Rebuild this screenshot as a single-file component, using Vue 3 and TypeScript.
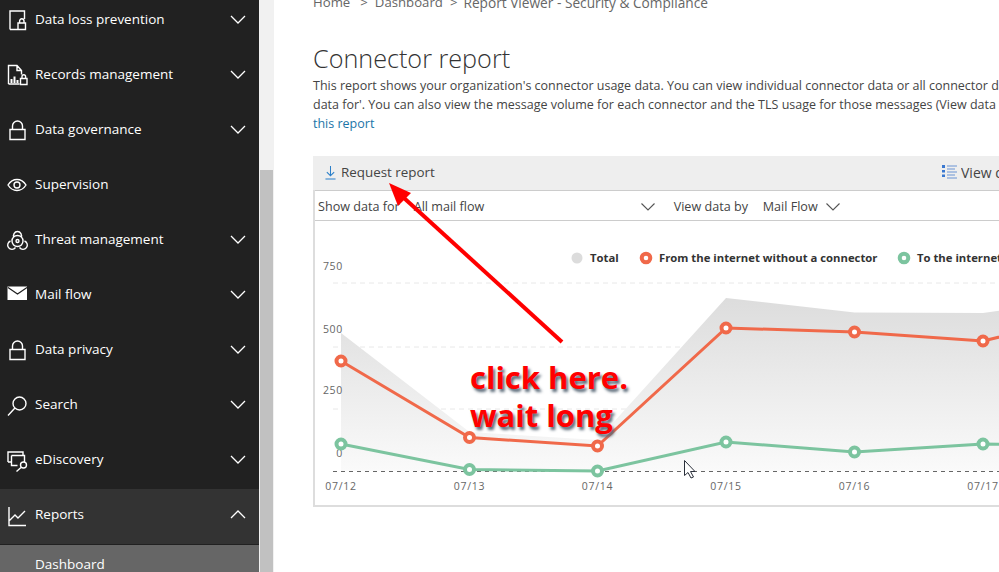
<script setup lang="ts">
const circle = (cx: number, cy: number, r: number): string =>
  `M${cx - r} ${cy}a${r} ${r} 0 1 0 ${2 * r} 0a${r} ${r} 0 1 0 ${-2 * r} 0z`

const lock = 'M3 10.5h15v10H3zM5.5 10.5V7a5 5 0 0 1 10 0v3.5'
const icons: Record<string, { d: string; f?: string }> = {
  dlp: { d: 'M3 20.5V2h14.5v8M3 20.5h7.500M11 14h7.500v6.500H11zM12.600 14v-2a2.200 2.200 0 0 1 4.400 0v2' },
  records: {
    d: 'M1.500 20V1.500h8.500l4.500 5v4M10 1.500v5h4.500M1.500 20h11M13.500 14.500h6.500v6h-6.500zM15 14.500v-2a1.800 1.800 0 0 1 3.600 0v2',
    f: 'M3.500 15h2v4h-2zM6.500 12.500h2v6.500h-2zM9.500 16h2v3h-2z'
  },
  lock: { d: lock },
  eye: { d: 'M1 11c2.500-4 5.500-5.500 9-5.500s6.500 1.500 9 5.500c-2.500 4-5.500 5.500-9 5.500s-6.500-1.500-9-5.500z' + circle(10, 11, 3) },
  bio: { d: 'M7 8.500a4 4 0 1 1 7 0M8.500 18.500a4.300 4.300 0 1 1-5-6.500M12.500 18.500a4.300 4.300 0 1 0 5-6.500' + circle(10.500, 12, 5.500) + circle(10.500, 12, 1.500) },
  mail: {
    d: 'M1 3.500l9.500 6.500 9.500-6.500',
    f: 'M.5 2.500h19.500v13.500H.5z'
  },
  search: { d: circle(12.500, 9.500, 6.500) + 'M7.700 14.300L1 21.500' },
  discovery: { d: 'M1 13V3h15v3.500M1 13h3.500M4.500 6.500h13v6M4.500 6.500v10h6M14 18.500L9.500 22.500' + circle(16.500, 16, 3) },
  reports: { d: 'M2 3v18.500h17M2 17l6-6 3 3 7-7' }
}

const navItems = [
  { label: 'Data loss prevention', icon: 'dlp', chev: true },
  { label: 'Records management', icon: 'records', chev: true },
  { label: 'Data governance', icon: 'lock', chev: true },
  { label: 'Supervision', icon: 'eye', chev: false },
  { label: 'Threat management', icon: 'bio', chev: true },
  { label: 'Mail flow', icon: 'mail', chev: true },
  { label: 'Data privacy', icon: 'lock', chev: true },
  { label: 'Search', icon: 'search', chev: true },
  { label: 'eDiscovery', icon: 'discovery', chev: true }
]

const xs = [341, 469.5, 597.5, 726, 854.5, 983, 1112]
const orangeY = [361, 437.5, 446, 328, 332, 341, 310]
const greenY = [444, 469.5, 471, 442, 452, 444, 447]
const areaY = [333, 432, 440, 298, 312.5, 313, 295]
const line = (ys: number[]): string => ys.map((y, i) => `${xs[i]},${y}`).join(' ')
const areaPoints = `${line(areaY)} 1112,471 341,471`
const orange = line(orangeY)
const green = line(greenY)
const markers = xs.slice(0, 6).map((x, i) => ({ x, o: orangeY[i], g: greenY[i] }))
const dates = ['07/12', '07/13', '07/14', '07/15', '07/16', '07/17'].map((t, i) => ({ t, x: xs[i] }))
const axis = [
  { t: '750', y: 270 },
  { t: '500', y: 333 },
  { t: '250', y: 394 },
  { t: '0', y: 457 }
]
const grid = [283, 347, 409]
</script>

<template>
  <div class="page">
    <aside class="sidebar">
      <nav class="nav">
        <div v-for="item in navItems" :key="item.label" class="row">
          <svg class="icon" viewBox="0 0 20 20" aria-hidden="true">
            <path v-if="icons[item.icon].f" class="icon-fill" :d="icons[item.icon].f" />
            <path :class="item.icon === 'mail' ? 'icon-dark' : 'icon-line'" :d="icons[item.icon].d" />
          </svg>
          <span class="row-label">{{ item.label }}</span>
          <svg v-if="item.chev" class="chev" viewBox="0 0 16 9" aria-hidden="true"><path d="M1 1l7 7 7-7" /></svg>
        </div>
        <div class="row row-active">
          <svg class="icon" viewBox="0 0 20 20" aria-hidden="true"><path class="icon-line" :d="icons.reports.d" /></svg>
          <span class="row-label">Reports</span>
          <svg class="chev" viewBox="0 0 16 9" aria-hidden="true"><path d="M1 8l7-7 7 7" /></svg>
        </div>
        <div class="sub-row">Dashboard</div>
      </nav>
    </aside>
    <div class="scrolltrack"><div class="scrollthumb"></div></div>

    <main class="main">
      <div class="crumbs">
        <span>Home</span><span class="sep">&gt;</span><span>Dashboard</span><span class="sep sep-b">&gt;</span><span class="crumb-last">Report Viewer - Security &amp; Compliance</span>
      </div>
      <h1 class="title">Connector report</h1>
      <div class="desc">
        <div>This report shows your organization's connector usage data. You can view individual connector data or all connector data using 'Show</div>
        <div>data for'. You can also view the message volume for each connector and the TLS usage for those messages (View data by). Learn more about</div>
        <a class="link">this report</a>
      </div>

      <section class="panel">
        <div class="toolbar">
          <svg class="dl-icon" viewBox="0 0 12 16" aria-hidden="true"><path d="M6 1v10M2 7.500l4 4 4-4M.5 15h11" /></svg>
          <span class="req">Request report</span>
          <span class="spacer"></span>
          <svg class="list-icon" viewBox="0 0 15 15" aria-hidden="true">
            <path class="list-dots" d="M0 0h3v3H0zM0 5h3v2.500H0zM0 9.500h3V12H0z" />
            <path class="list-lines" d="M5 1h10M5 4h8M5 7h10M5 10h8M5 13h10" />
          </svg>
          <span class="view">View details table</span>
        </div>
        <div class="filters">
          <span>Show data for</span>
          <span class="all">All mail flow</span>
          <svg class="fchev fchev-a" viewBox="0 0 14 8" aria-hidden="true"><path d="M.5.500l6.500 6.500 6.500-6.500" /></svg>
          <span class="by">View data by</span>
          <span class="flow">Mail Flow</span>
          <svg class="fchev fchev-b" viewBox="0 0 14 8" aria-hidden="true"><path d="M.5.500l6.500 6.500 6.500-6.500" /></svg>
        </div>
        <svg class="chart" viewBox="315 221 698 284" aria-label="Connector usage chart">
          <defs>
            <linearGradient id="areaGrad" x1="0" y1="0" x2="0" y2="1">
              <stop offset="0" stop-color="#dcdcdc" />
              <stop offset="1" stop-color="#fafafa" />
            </linearGradient>
          </defs>
          <line v-for="y in grid" :key="y" class="grid" x1="333" x2="1013" :y1="y" :y2="y" />
          <polygon :points="areaPoints" fill="url(#areaGrad)" />
          <line class="base" x1="333" x2="1013" y1="471.500" y2="471.500" />
          <text v-for="a in axis" :key="a.t" class="tick" x="343" :y="a.y" text-anchor="end">{{ a.t }}</text>
          <text v-for="d in dates" :key="d.t" class="tick" :x="d.x" y="490" text-anchor="middle">{{ d.t }}</text>
          <polyline class="series s-orange" :points="orange" />
          <polyline class="series s-green" :points="green" />
          <g v-for="m in markers" :key="m.x">
            <circle class="dot d-orange" :cx="m.x" :cy="m.o" r="4.500" />
            <circle class="dot d-green" :cx="m.x" :cy="m.g" r="4.500" />
          </g>
          <circle cx="577" cy="258" r="5.500" fill="#dcdcdc" />
          <text class="legend" x="590" y="262">Total</text>
          <circle class="dot d-orange" cx="646" cy="258" r="4.300" />
          <text class="legend" x="659" y="262">From the internet without a connector</text>
          <circle class="dot d-green" cx="904" cy="258" r="4.300" />
          <text class="legend" x="917" y="262">To the internet without a connector</text>
        </svg>
      </section>

      <svg class="overlay" viewBox="273 0 726 572" aria-hidden="true">
        <path class="red-line" d="M561 342L403 198" />
        <path class="red-head" d="M388 183l22 10-13 13z" />
        <path class="cursor" d="M683.500 460.500v15l3.500-3 3 5.500 2.500-1-3-5.500h4.500z" />
      </svg>
      <div class="note">click here.<br />wait long</div>
    </main>
  </div>
</template>

<style>
html, body { margin: 0; overflow: hidden; background: #fff; }
</style>

<style scoped>
.page {
  display: flex;
  width: 999px;
  height: 572px;
  overflow: hidden;
  font-family: "Open Sans", "Liberation Sans", sans-serif;
  color: #333;
}
.sidebar {
  width: 259px;
  flex: none;
  background: #212121;
  color: #fff;
  overflow: hidden;
}
.nav { margin-top: -6px; }
.row {
  box-sizing: border-box;
  height: 55px;
  padding: 0 13px 5px 7px;
  display: flex;
  align-items: center;
  font-size: 13.5px;
}
.row-active { background: #333; margin-bottom: 1px; }
.icon { width: 20px; height: 20px; flex: none; overflow: visible; }
.icon-line, .icon-dark { fill: none; stroke-width: 1.4; }
.icon-line { stroke: #fff; }
.icon-dark { stroke: #212121; stroke-width: 1.2; }
.icon-fill { fill: #fff; }
.row-label { margin-left: 8px; flex: 1; white-space: nowrap; }
.chev { width: 16px; height: 9px; fill: none; stroke: #fff; stroke-width: 1.3; flex: none; }
.sub-row {
  height: 40px;
  padding: 10px 0 0 35px;
  box-sizing: border-box;
  background: #666;
  font-size: 13.5px;
}
.scrolltrack {
  width: 15px;
  flex: none;
  box-sizing: border-box;
  padding: 170px 1px 0;
  background: #f1f1f1;
}
.scrollthumb { height: 100%; background: #c1c1c1; }

.main {
  position: relative;
  flex: 1;
  min-width: 0;
  padding-left: 39px;
  overflow: hidden;
}
.crumbs {
  margin-top: -7px;
  height: 19px;
  line-height: 19px;
  font-size: 13.2px;
  color: #666;
  white-space: nowrap;
  display: flex;
}
.sep { margin: 0 7px 0 10px; }
.sep-b { margin: 0 6px 0 7px; }
.crumb-last { font-size: 13.7px; }
.title {
  margin: 28px 0 0;
  height: 36px;
  line-height: 36px;
  font-size: 25.2px;
  font-weight: 300;
  color: #333;
  white-space: nowrap;
}
.desc {
  font-size: 12.5px;
  line-height: 19px;
  color: #444;
  white-space: nowrap;
}
.link { color: #1b75a8; display: block; }
.panel {
  box-sizing: border-box;
  margin-top: 23px;
  width: 700px;
  height: 351px;
  border-left: 2px solid #ddd;
  border-bottom: 2px solid #ddd;
}
.toolbar {
  display: flex;
  align-items: center;
  height: 34px;
  margin-left: -2px;
  padding: 0 0 2px 12px;
  box-sizing: border-box;
  background: #eee;
  font-size: 13.4px;
  white-space: nowrap;
}
.dl-icon { width: 11px; height: 15px; fill: none; stroke: #2a7fc9; stroke-width: 1.1; flex: none; }
.req { margin-left: 5px; color: #444; }
.spacer { flex: 1; }
.list-icon { width: 15px; height: 15px; flex: none; }
.list-dots { fill: #3a78d0; }
.list-lines { stroke: #6a94d4; stroke-width: 1; }
.view { margin-left: 4px; width: 52px; overflow: hidden; flex: none; color: #444; font-size: 14px; }
.filters {
  position: relative;
  display: flex;
  align-items: center;
  box-sizing: border-box;
  height: 31px;
  padding: 2px 0 0 3px;
  border-top: 1px solid #ccc;
  border-bottom: 1px solid #ccc;
  font-size: 12.6px;
  color: #444;
  white-space: nowrap;
}
.all { margin-left: 14px; width: 227px; flex: none; }
.fchev { width: 14px; height: 8px; fill: none; stroke: #555; stroke-width: 1.1; flex: none; }
.fchev-a { margin-right: 19px; }
.by { width: 89px; flex: none; }
.flow { width: 63px; flex: none; }
.chart { display: block; width: 698px; height: 284px; }
.grid { stroke: #e8e8e8; stroke-dasharray: 5 4; }
.base { stroke: #666; stroke-dasharray: 4 4; }
.tick { font-size: 10.5px; fill: #666; letter-spacing: .7px; font-family: "Open Sans", sans-serif; }
.series { fill: none; stroke-width: 3; }
.s-orange { stroke: #f0694a; }
.s-green { stroke: #7cc49f; }
.dot { fill: #fff; stroke-width: 4; }
.d-orange { stroke: #f0694a; }
.d-green { stroke: #7cc49f; }
.legend { font-size: 11.3px; font-weight: 700; fill: #333; font-family: "Open Sans", sans-serif; }

.overlay {
  position: absolute;
  left: 0;
  top: 0;
  width: 726px;
  height: 572px;
  pointer-events: none;
}
.red-line { fill: none; stroke: #f00; stroke-width: 4; }
.red-head { fill: #f00; }
.cursor { fill: #fff; stroke: #2a2f3a; stroke-width: 1; }
.note {
  position: absolute;
  left: 196px;
  top: 358px;
  font-size: 31px;
  line-height: 38px;
  font-weight: 700;
  color: #f00;
  text-shadow: 2px 3px 3px #5a6a78;
  white-space: nowrap;
}
</style>
